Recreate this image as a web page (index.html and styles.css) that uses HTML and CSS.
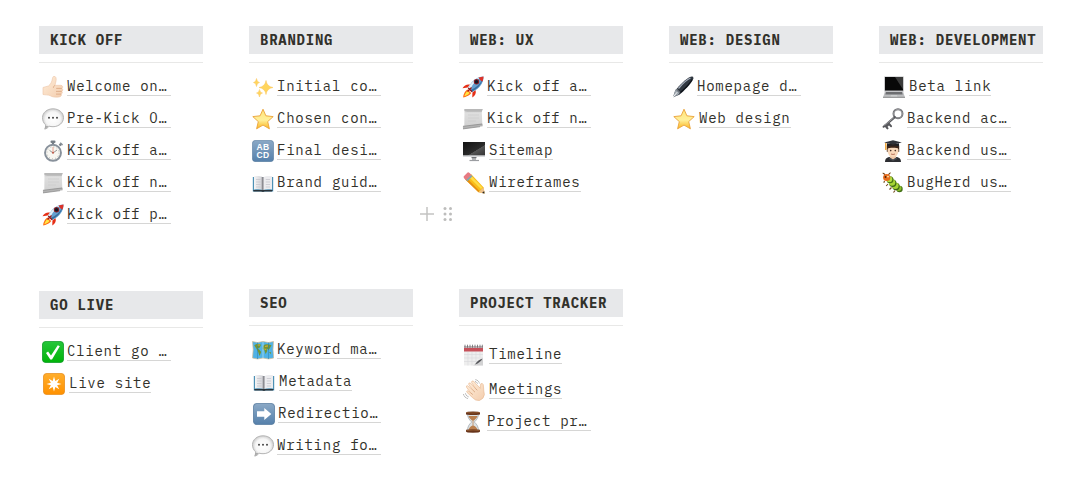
FILE: index.html
```
<!DOCTYPE html>
<html lang="en">
<head>
<meta charset="utf-8">
<title>Project hub</title>
<link rel="stylesheet" href="styles.css">
</head>
<body>
<svg class="sprite" aria-hidden="true">
  <defs>
    <linearGradient id="skin" x1="0" y1="0" x2="1" y2="1"><stop offset="0" stop-color="#ffeeda"/><stop offset="1" stop-color="#f3cdae"/></linearGradient>
    <linearGradient id="gold" x1="0" y1="0" x2="0" y2="1"><stop offset="0" stop-color="#ffe27a"/><stop offset=".55" stop-color="#fff09a"/><stop offset="1" stop-color="#fbb31c"/></linearGradient>
    <linearGradient id="blue" x1="0" y1="0" x2="0" y2="1"><stop offset="0" stop-color="#8ba9c6"/><stop offset="1" stop-color="#5580ab"/></linearGradient>
    <linearGradient id="green" x1="0" y1="0" x2="0" y2="1"><stop offset="0" stop-color="#25c63a"/><stop offset="1" stop-color="#00b409"/></linearGradient>
    <linearGradient id="orange" x1="0" y1="0" x2="0" y2="1"><stop offset="0" stop-color="#ffae2c"/><stop offset="1" stop-color="#ff9100"/></linearGradient>
    <linearGradient id="silver" x1="0" y1="0" x2="0" y2="1"><stop offset="0" stop-color="#c4c4c4"/><stop offset=".25" stop-color="#dedede"/><stop offset="1" stop-color="#d2d2d2"/></linearGradient>
    <linearGradient id="screen" x1="0" y1="0" x2="1" y2="1"><stop offset="0" stop-color="#111"/><stop offset=".6" stop-color="#2b2b2b"/><stop offset=".62" stop-color="#555"/><stop offset="1" stop-color="#333"/></linearGradient>
    <linearGradient id="page" x1="0" y1="0" x2="1" y2="0"><stop offset="0" stop-color="#f5f5f6"/><stop offset=".75" stop-color="#d8d8dc"/><stop offset="1" stop-color="#8e8e94"/></linearGradient>
    <radialGradient id="bubble"><stop offset="0" stop-color="#fff"/><stop offset=".7" stop-color="#f6f6f6"/><stop offset="1" stop-color="#cfcfcf"/></radialGradient>
  </defs>
  <symbol id="thumb" viewBox="0 0 22 22">
    <path d="M1 11.5C3 10.6 5 10.6 6.4 10c2.400-1.600 3.400-4.200 4-7.200.3-1.700.8-2.500 1.700-2.500 1.800 0 2.500 2.200 1.900 4.700L13 9.300h5.700c2.300 0 2.500 2.400 1.200 3 1.300.8 1.100 2.600-.1 3 .9.900.6 2.400-.6 2.700.6 1.300-.2 2.800-1.900 2.900-3.600.5-6.900.3-9.300-1.300C6 18.700 3 19 1 18.500z" fill="url(#skin)" stroke="#ecc5a6" stroke-width=".6"/>
    <path d="M13 9.400c-1.200.6-1.800 1.500-1.500 2.500M14.200 12.400h5.600M14 15.400h5.700M14 18.100h5" fill="none" stroke="#d9a47f" stroke-width=".8"/>
  </symbol>
  <symbol id="speech" viewBox="0 0 22 22">
    <path d="M11 .8c6 0 10.500 3.900 10.500 8.900s-4.500 9-10.500 9c-1.300 0-2.700-.2-3.800-.5-1.100 1.400-2.800 2.500-4.500 2.900.8-1.300 1.100-2.700.7-4.500C1.600 15 .5 12.600.5 9.700.5 4.700 5 .8 11 .8z" fill="url(#bubble)" stroke="#b5b5b5" stroke-width="1"/>
    <path d="M3 18.300c.8 0 2.300-.3 3.600-.2-1 1.200-2.200 2.200-3.700 2.800z" fill="#aaa"/>
    <circle cx="7" cy="9.700" r="1" fill="#444"/><circle cx="11" cy="9.700" r="1" fill="#444"/><circle cx="15" cy="9.700" r="1" fill="#444"/>
  </symbol>
  <symbol id="watch" viewBox="0 0 22 22">
    <rect x="8.500" y=".5" width="5" height="2.600" rx="1" fill="#777f87"/><path d="M11 3v2M17.500 5.500l2-2" stroke="#757d85" stroke-width="2.200"/><path d="M18.200 2.800l2.300 2.300" stroke="#8c949b" stroke-width="1.600"/>
    <circle cx="11" cy="12.800" r="8" fill="#f8f7f2" stroke="#88919b" stroke-width="1.900"/>
    <circle cx="11" cy="12.800" r="6" fill="none" stroke="#777" stroke-width=".8" stroke-dasharray=".6 2.540"/>
    <path d="M11 13V7" stroke="#e58b78" stroke-width=".8"/><path d="M11 13L7.500 10.300M11 13l4-3" stroke="#777" stroke-width=".8"/><circle cx="11" cy="12.800" r="1" fill="#c25b4a"/>
  </symbol>
  <symbol id="scroll" viewBox="0 0 22 22">
    <path d="M2.500 1h18.300l-1 2.600.5 12.700L2.300 18z" fill="url(#silver)"/>
    <path d="M2.500 1h18l-.7 2.800H5.500L2.500 3z" fill="#b8b8b8"/>
    <path d="M6 7h11M6 10h11M6 13h8" stroke="#cacaca" stroke-width=".6"/>
    <path d="M.9 18.200l19.700-2.400v2.500L1 21z" fill="#b3b3b3"/><path d="M1 18.300l19-2.300M1 20.900l17-2.200" stroke="#858585" stroke-width=".7"/>
  </symbol>
  <symbol id="rocket" viewBox="0 0 22 22">
    <path d="M5.500 13.500c-2 1-4.200 4.500-4.300 7.900 2.500-.8 6.300-1.500 8-4.500z" fill="#ff6c13"/><path d="M5.300 15c-1.200 1-2.200 3-3 5.200 2-.7 4-1.200 5.200-3.200z" fill="#ffe645"/>
    <path d="M8 8.500C5 8 2 9 .5 12.300l5.200-.8zM13.500 14c1 3-.3 5.700-3.200 7.600l.1-5z" fill="#e62f17"/>
    <path d="M21.500.6c-6.200 0-11.700 3.800-15.400 11.900l3.800 3.700C17.500 13 21.600 7 21.500.6z" fill="#65a0d0"/>
    <path d="M18.500 1.300C14 2.300 9.500 5.500 6.700 11.700l1.900.9C11 7.300 14.700 4 18.500 1.300z" fill="#e4f1fa"/><path d="M20.800 3c-1.600 6-5.300 9.700-11 12.700l-1.600-1.500C14 12 18 8 20.800 3z" fill="#376d9e"/>
    <path d="M21.500.6l-4.800.8c.8 2 2 3.400 3.800 4 .8-1.600 1-3.200 1-4.800z" fill="#dc3229"/><circle cx="14.500" cy="5.700" r="2.700" fill="#861e24"/><circle cx="14.500" cy="5.700" r="1.700" fill="#111a29"/>
    <path d="M6.200 12l3.900 3.800M5.500 15.500l4-4" stroke="#9e1b18" stroke-width="1.200"/>
  </symbol>
  <symbol id="sparkles" viewBox="0 0 22 22">
    <path d="M14 4.500q.9 6.100 7 7-6.100.9-7 7-.9-6.100-7-7 6.100-.9 7-7zM4.500 2.500q.4 3.600 3 4-2.600.4-3 4-.4-3.600-3-4 2.600-.4 3-4zM7.500 13.500q.4 3.100 3 3.500-2.600.4-3 4-.4-3.600-3-4 2.600-.4 3-3.500z" fill="#ffd55c" stroke="#fbc357" stroke-width=".5"/>
  </symbol>
  <symbol id="star" viewBox="0 0 22 22">
    <path d="M11 1.200l2.900 6.600 7.300.8-5.500 5 1.700 7.200-6.400-3.700-6.400 3.700 1.700-7.200-5.500-5 7.300-.8z" fill="url(#gold)" stroke="#eaa33a" stroke-width=".9" stroke-linejoin="round"/>
  </symbol>
  <symbol id="abcd" viewBox="0 0 22 22">
    <rect x=".3" y=".3" width="21.400" height="21.400" rx="3.500" fill="url(#blue)" stroke="#5a7c9e" stroke-width=".6"/>
    <text x="11" y="9.800" class="glyph">AB</text><text x="11" y="18.400" class="glyph">CD</text>
  </symbol>
  <symbol id="book" viewBox="0 0 22 22">
    <path d="M.8 5h20.400v14.500H.8z" fill="#4d91b5"/><path d="M1.200 18h19.600l-1 1.500h-7L11 20l-2-.5H1.500z" fill="#29333b"/>
    <path d="M2 4.200c3-.5 6.500-.3 9 1V18c-2.500-1-6-1-9-.4z" fill="url(#page)"/><path d="M20 4.200c-3-.5-6.500-.3-9 1V18c2.500-1 6-1 9-.4z" fill="#ececef"/>
    <path d="M4 7.500h4.500M4 10h4.500M4 12.500h4.500M4 15h4.500M13.800 7.500H18M13.800 10H18M13.800 12.500H18M13.800 15H18" stroke="#c2c2c8" stroke-width=".7"/><path d="M11 5v13" stroke="#75757c" stroke-width=".9"/>
  </symbol>
  <symbol id="desktop" viewBox="0 0 22 22">
    <path d="M0 2h22v15H0z" fill="#aeb0b3"/><path d="M0 2h22v13.500H0z" fill="url(#screen)"/><path d="M9 17h4v3H9z" fill="#b5b7b9"/><path d="M8.500 17h5v1.200h-5z" fill="#707276"/><path d="M6.500 20.500h9.500" stroke="#9b9da1" stroke-width="1.200"/><path d="M0 16.200h22" stroke="#dddee0" stroke-width="1.400"/>
  </symbol>
  <symbol id="pencil" viewBox="0 0 22 22">
    <path d="M5.200 4.800L8 2l12.700 13.500.8 6-6-1.200L2.400 7.500z" fill="#f9bd18"/><path d="M3.800 6L16.500 19l-1 1.300L2.200 7.500z" fill="#e58e13"/><path d="M7.500 2.900l12 12.700-1.500 1.300L5.300 4.500z" fill="#ffdc48"/>
    <path d="M15.500 20.300l5.200-5 .8 6.200z" fill="#edc18d"/><path d="M19 21l2.200-2 .3 2.500z" fill="#262626"/><path d="M.8 4.200L4.300.7q1-.9 2.300.4L8.500 3 3.200 8.200 1.300 6.400Q.3 5.300.8 4.200z" fill="#e77a82"/><path d="M3.100 7.900l5.100-5 1.300 1.400-5 5z" fill="#82a4b5"/>
  </symbol>
  <symbol id="pen" viewBox="0 0 22 22">
    <path d="M1 21.200l2.200-6.500C7 9.500 14 2.300 18.700.7q3-.8 2.700 1.700C19.500 7.500 11.800 15 7.300 18.700z" fill="#303740"/>
    <path d="M6.500 12.500c4-4.800 8.500-9 12-10.500" fill="none" stroke="#a3acb9" stroke-width="1.300"/><path d="M8.500 16.500c5-4.500 9.500-9 11.700-13" fill="none" stroke="#0d1117" stroke-width="1.200"/>
    <path d="M1 21.200l2-6.300 1.700-2.200 3.400 3.500-1.800 2.500z" fill="#9ba4ac"/><path d="M1 21.200l4.200-5" stroke="#fff" stroke-width=".9"/><path d="M4 13.300l4 4" stroke="#5c6269" stroke-width="1"/>
  </symbol>
  <symbol id="laptop" viewBox="0 0 22 22">
    <path d="M1.300.5h19.400v15H1.300z" fill="#b7b8ba"/><path d="M2 1h18v13.500H2z" fill="#080808"/><path d="M12 1h8v12.500z" fill="#3a3a3a"/>
    <path d="M2 15.200h18l2 6.300H0z" fill="#bdbec0"/><path d="M3 16h16l.7 2.600H2.300z" fill="#6d6e71"/><path d="M8 19.200h6l.4 1.500H7.600z" fill="#d2d3d4"/><path d="M0 21.300h22" stroke="#8a8b8d" stroke-width="1"/>
  </symbol>
  <symbol id="key" viewBox="0 0 22 22">
    <circle cx="16" cy="5.700" r="4.500" fill="none" stroke="#65666a" stroke-width="1.900"/><circle cx="16" cy="5.700" r="4.400" fill="none" stroke="#bfc0c3" stroke-width=".6"/>
    <path d="M12.800 9.100L1.600 18.700M3 17.300l2.500 3M6 14.800l3 3.300M4.200 18.600L6 17" stroke="#56575b" stroke-width="2.100" stroke-linecap="round" fill="none"/><path d="M12 9.500l-9.500 8" stroke="#b4b5b8" stroke-width=".7"/>
  </symbol>
  <symbol id="student" viewBox="0 0 22 22">
    <path d="M3 22c0-4 2.500-5.300 8-5.300s8 1.300 8 5.300z" fill="#2d2e32"/><path d="M8 14h6v4l-3 2-3-2z" fill="#efc8a8"/><path d="M7 17l4 2.500 4-2.500v2l-4 2-4-2z" fill="#484b51"/>
    <path d="M4.800 5.500h12.400v6.300H4.800z" fill="#3b2418"/><ellipse cx="11" cy="10.800" rx="5.500" ry="6.200" fill="#f9d8ba"/><path d="M5 8.600V4h12v4.600c-2.500-1-9.500-1-12 0z" fill="#3b2419"/>
    <path d="M2.200 2.500L11 .3l8.800 2.200L11 4.800z" fill="#303238"/><path d="M5 3.300v3q6-1.500 12 0v-3L11 5z" fill="#1d1f25"/><path d="M3.800 3v7" stroke="#ef9b21" stroke-width="1.300"/>
    <circle cx="8.700" cy="10.600" r=".8" fill="#43291f"/><circle cx="13.300" cy="10.600" r=".8" fill="#43291f"/><path d="M9 14q2 1 4 0" fill="none" stroke="#b46b54" stroke-width=".9"/>
  </symbol>
  <symbol id="bug" viewBox="0 0 22 22">
    <path d="M3.300 3.600Q2.500 1 .7 1.400M6.500 3Q7.500.6 8.700 1M2.500 9l-.7 1.800M6 12l-1.800 2M9.500 15.500l-2 2M13 18.500l-1.500 2" stroke="#714319" stroke-width="1.100" fill="none"/>
    <circle cx="17.500" cy="17" r="3.200" fill="#427017"/><circle cx="16.700" cy="16.300" r="2.700" fill="#8fbf2a"/><circle cx="14" cy="14.500" r="3.700" fill="#3c6614"/><circle cx="13.300" cy="13.700" r="3.300" fill="#a6d336"/><circle cx="10.700" cy="11.300" r="3.700" fill="#3c6614"/><circle cx="10" cy="10.500" r="3.300" fill="#a5d535"/><circle cx="8" cy="7.800" r="3.500" fill="#4c7619"/><circle cx="7.300" cy="7.200" r="2.900" fill="#b3df42"/>
    <circle cx="4.700" cy="5.500" r="3.600" fill="#e76c1d"/><circle cx="3.500" cy="5" r=".9" fill="#4a2310"/><circle cx="6" cy="4.600" r=".9" fill="#ffe5a6"/>
  </symbol>
  <symbol id="check" viewBox="0 0 22 22">
    <rect x=".4" y=".4" width="21.200" height="21.200" rx="3.500" fill="url(#green)" stroke="#079822" stroke-width=".8"/><path d="M4 12l2.100-1.500 2.900 4 6.800-10.300 2 1L10 18.500H8.300z" fill="#fff"/>
  </symbol>
  <symbol id="burst" viewBox="0 0 22 22">
    <rect x=".4" y=".4" width="21.200" height="21.200" rx="3.500" fill="url(#orange)" stroke="#e78c1a" stroke-width=".8"/><path d="M11 3.500l1.300 4.400 4-2.200-2.200 4 4.400 1.300-4.400 1.300 2.200 4-4-2.200-1.300 4.400-1.300-4.400-4 2.200 2.200-4L3.500 11l4.400-1.300-2.200-4 4 2.200z" fill="#fff"/>
  </symbol>
  <symbol id="map" viewBox="0 0 22 22">
    <path d="M.5 2.500l5 1 5.500-1 5.500 1 5-1-.5 8 .7 8.500-5.200 1-5.500-1-5.500 1-5-1 .7-8.500z" fill="#50b2e5" stroke="#d3bc93" stroke-width=".7"/>
    <path d="M2.300 6.400Q5 3.600 9 5.800L7.800 8.500 6 9.500l2 2 1.200 1.500L7.500 17l-1.300-4-2-3.700zM11.300 6.600Q14 4.300 19.500 6.300L18 9l-1.500 2-1.800-1.500.6 2.500-1.700 3-1.300-4-1.800-1.200zM17 13l2 .3v2z" fill="#739633"/><path d="M5 6h3M13 7.500l3-.7M12.300 10l2 .5" stroke="#d2ad38" stroke-width="1.200"/>
    <path d="M5.500 3.500V20M16.500 3.500V20" stroke="#287daf" stroke-width=".8" opacity=".6"/><path d="M11 3v16" stroke="#a8ddf2" stroke-width=".8"/>
  </symbol>
  <symbol id="arrow" viewBox="0 0 22 22">
    <rect x=".4" y=".4" width="21.200" height="21.200" rx="3.500" fill="url(#blue)" stroke="#54799d" stroke-width=".8"/><path d="M4 8.300h7.300V5l7 6-7 6v-3.300H4z" fill="#fff"/>
  </symbol>
  <symbol id="calendar" viewBox="0 0 22 22">
    <path d="M1 2h19v19.500H1z" fill="#eee"/><path d="M1 2h19v5.500H1z" fill="#c6515a"/><path d="M1 2h19v2H1z" fill="#c0b5b7"/><path d="M2 .7v3M4.500.7v3M7 .7v3M9.500.7v3M12 .7v3M14.500.7v3M17 .7v3M19.300.7v3" stroke="#66666a" stroke-width=".8"/>
    <path d="M1 10.500h19M1 14h19M1 17.500h13M5 8v13.500M9 8v13.500M13 8v10M17 8v5" stroke="#d9d9db" stroke-width=".6"/><path d="M10 21.500l10-7v7z" fill="#d2d2d3"/><path d="M12 20.500q2.500-4.500 7.500-6-2 4-7.500 6z" fill="#55565a"/>
  </symbol>
  <symbol id="wave" viewBox="0 0 22 22">
    <path d="M3.500 8.200Q3 6.400 4.600 6.700l5 4.200L5.700 5.500Q5.400 3.400 7.300 4l5 5.300-3.800-6Q8.600 1.500 10.300 2l7 7.300V6.500q.2-2.500 2-2 1.300.5 1.200 3.500.1 4 .9 7.500-.6 4.500-5 6-4 .5-7-3L4 13.400Q3 12 4.500 11.700l3 2z" fill="url(#skin)" stroke="#e6b48c" stroke-width=".6"/>
    <path d="M9.600 10.900l2.400 2.300M12.300 9.300l2 2M7.500 13.700l2.300 1.900" stroke="#d29e79" stroke-width=".8"/><path d="M12.500.7q3 .6 4 3.600M12 2.500q2 .6 2.700 2.500M.5 15.200q.8 3.400 4.600 4.400M2.500 14.500q.4 2.200 3 3.300" stroke="#9b9b9b" stroke-width="1" stroke-dasharray="1.200 .5" fill="none"/>
  </symbol>
  <symbol id="hourglass" viewBox="0 0 22 22">
    <path d="M5.500 2h11c0 4.500-1.500 6.500-4.200 9 2.700 2.500 4.200 4.500 4.200 9h-11c0-4.500 1.500-6.500 4.200-9C7 8.500 5.500 6.500 5.500 2z" fill="#dce2e5" stroke="#9da5aa" stroke-width=".7"/>
    <path d="M6.500 5h9q-.5 2.500-3.500 4.500h-2Q7 7.500 6.500 5zM6.500 19q1-3.700 4.500-4.500 3.500.8 4.500 4.500z" fill="#ba8050"/><path d="M11 9v7" stroke="#bc8757" stroke-width=".8"/>
    <path d="M4 1.700q0-1.200 7-1.200t7 1.200v1.700q-7 1.200-14 0zM4 18.800q7-1.200 14 0v1.700q0 1.200-7 1.200t-7-1.200z" fill="#68351b"/><path d="M4.500 1.500q6.500 1 13 0M4.500 19.500q6.500-1 13 0" stroke="#a16739" stroke-width=".7" fill="none"/>
  </symbol>
</svg>

<main class="board">
  <div class="band">
    <section class="column">
      <h2 class="title">KICK OFF</h2>
      <ul class="links">
        <li class="item clipped"><svg class="icon"><use href="#thumb"/></svg><a class="label">Welcome on…</a></li>
        <li class="item clipped"><svg class="icon"><use href="#speech"/></svg><a class="label">Pre-Kick O…</a></li>
        <li class="item clipped"><svg class="icon"><use href="#watch"/></svg><a class="label">Kick off a…</a></li>
        <li class="item clipped"><svg class="icon"><use href="#scroll"/></svg><a class="label">Kick off n…</a></li>
        <li class="item clipped"><svg class="icon"><use href="#rocket"/></svg><a class="label">Kick off p…</a></li>
      </ul>
    </section>
    <section class="column">
      <h2 class="title">BRANDING</h2>
      <ul class="links">
        <li class="item clipped"><svg class="icon"><use href="#sparkles"/></svg><a class="label">Initial co…</a></li>
        <li class="item clipped"><svg class="icon"><use href="#star"/></svg><a class="label">Chosen con…</a></li>
        <li class="item clipped"><svg class="icon"><use href="#abcd"/></svg><a class="label">Final desi…</a></li>
        <li class="item clipped"><svg class="icon"><use href="#book"/></svg><a class="label">Brand guid…</a></li>
      </ul>
    </section>
    <section class="column">
      <h2 class="title">WEB: UX</h2>
      <ul class="links">
        <li class="item clipped"><svg class="icon"><use href="#rocket"/></svg><a class="label">Kick off a…</a></li>
        <li class="item clipped"><svg class="icon"><use href="#scroll"/></svg><a class="label">Kick off n…</a></li>
        <li class="item"><svg class="icon"><use href="#desktop"/></svg><a class="label">Sitemap</a></li>
        <li class="item"><svg class="icon"><use href="#pencil"/></svg><a class="label">Wireframes</a></li>
      </ul>
      <div class="block-tools">
        <svg class="plus" viewBox="0 0 14 14"><path d="M7 0v14M0 7h14"/></svg>
        <svg class="grip" viewBox="0 0 10 14"><circle cx="2" cy="1.500" r="1.500"/><circle cx="7.500" cy="1.500" r="1.500"/><circle cx="2" cy="7" r="1.500"/><circle cx="7.500" cy="7" r="1.500"/><circle cx="2" cy="12.500" r="1.500"/><circle cx="7.500" cy="12.500" r="1.500"/></svg>
      </div>
    </section>
    <section class="column">
      <h2 class="title">WEB: DESIGN</h2>
      <ul class="links">
        <li class="item clipped"><svg class="icon"><use href="#pen"/></svg><a class="label">Homepage d…</a></li>
        <li class="item"><svg class="icon"><use href="#star"/></svg><a class="label">Web design</a></li>
      </ul>
    </section>
    <section class="column">
      <h2 class="title">WEB: DEVELOPMENT</h2>
      <ul class="links">
        <li class="item"><svg class="icon"><use href="#laptop"/></svg><a class="label">Beta link</a></li>
        <li class="item clipped"><svg class="icon"><use href="#key"/></svg><a class="label">Backend ac…</a></li>
        <li class="item clipped"><svg class="icon"><use href="#student"/></svg><a class="label">Backend us…</a></li>
        <li class="item clipped"><svg class="icon"><use href="#bug"/></svg><a class="label">BugHerd us…</a></li>
      </ul>
    </section>
  </div>
  <div class="band">
    <section class="column lowered">
      <h2 class="title">GO LIVE</h2>
      <ul class="links">
        <li class="item clipped"><svg class="icon"><use href="#check"/></svg><a class="label">Client go …</a></li>
        <li class="item"><svg class="icon"><use href="#burst"/></svg><a class="label">Live site</a></li>
      </ul>
    </section>
    <section class="column">
      <h2 class="title">SEO</h2>
      <ul class="links">
        <li class="item clipped"><svg class="icon"><use href="#map"/></svg><a class="label">Keyword ma…</a></li>
        <li class="item"><svg class="icon"><use href="#book"/></svg><a class="label">Metadata</a></li>
        <li class="item clipped shifted"><svg class="icon"><use href="#arrow"/></svg><a class="label">Redirectio…</a></li>
        <li class="item clipped"><svg class="icon"><use href="#speech"/></svg><a class="label">Writing fo…</a></li>
      </ul>
    </section>
    <section class="column">
      <h2 class="title">PROJECT TRACKER</h2>
      <ul class="links roomy">
        <li class="item"><svg class="icon"><use href="#calendar"/></svg><a class="label">Timeline</a></li>
        <li class="item"><svg class="icon"><use href="#wave"/></svg><a class="label">Meetings</a></li>
        <li class="item clipped"><svg class="icon"><use href="#hourglass"/></svg><a class="label">Project pr…</a></li>
      </ul>
    </section>
  </div>
</main>
</body>
</html>
```
FILE: styles.css
```
* { box-sizing: border-box; }

body {
  margin: 0;
  background: #fff;
  color: #32312b;
  font-family: "IBM Plex Mono", "Liberation Mono", monospace;
  font-size: 14px;
  letter-spacing: 0.75px;
  overflow: hidden;
}

.sprite { position: absolute; width: 0; height: 0; }

.board {
  display: flex;
  flex-direction: column;
  gap: 58px;
  padding: 26px 36px 0 39px;
}

.band {
  display: flex;
  align-items: flex-start;
  gap: 46px;
}

.column { position: relative; flex: none; width: 164px; }
.lowered { margin-top: 2px; }

.title {
  height: 28px;
  margin: 0 0 8px;
  padding-left: 11px;
  background: #e7e8ea;
  font-size: 14px;
  font-weight: 700;
  line-height: 29px;
  white-space: nowrap;
}

.links {
  margin: 0;
  padding: 8px 0 0;
  border-top: 1px solid #e8e8e7;
  list-style: none;
}

.item {
  display: flex;
  align-items: flex-start;
  gap: 4px;
  height: 32px;
  padding: 5px 0 0 4px;
}

.clipped { gap: 3px; padding-left: 3px; }
.clipped .label { width: 104px; }
.shifted { padding-left: 4px; }
.shifted .label { width: 103px; }

.roomy { padding-top: 13px; }
.roomy .item:first-child { height: 35px; }

.icon { flex: none; width: 22px; height: 22px; }

.glyph {
  fill: #fff;
  font: 700 8.500px "Liberation Sans", sans-serif;
  letter-spacing: 0.300px;
  text-anchor: middle;
}

.label {
  height: 20px;
  border-bottom: 1px solid #d6d6d5;
  line-height: 20px;
  white-space: nowrap;
}

/* Hover controls sit over the gutter left of the column */
.block-tools {
  position: absolute;
  top: 181px;
  left: -39px;
  display: flex;
  gap: 9px;
}

.plus { width: 14px; height: 14px; fill: none; stroke: #c3c3c2; stroke-width: 1.500; }
.grip { width: 10px; height: 14px; fill: #bdbdbc; }
```
